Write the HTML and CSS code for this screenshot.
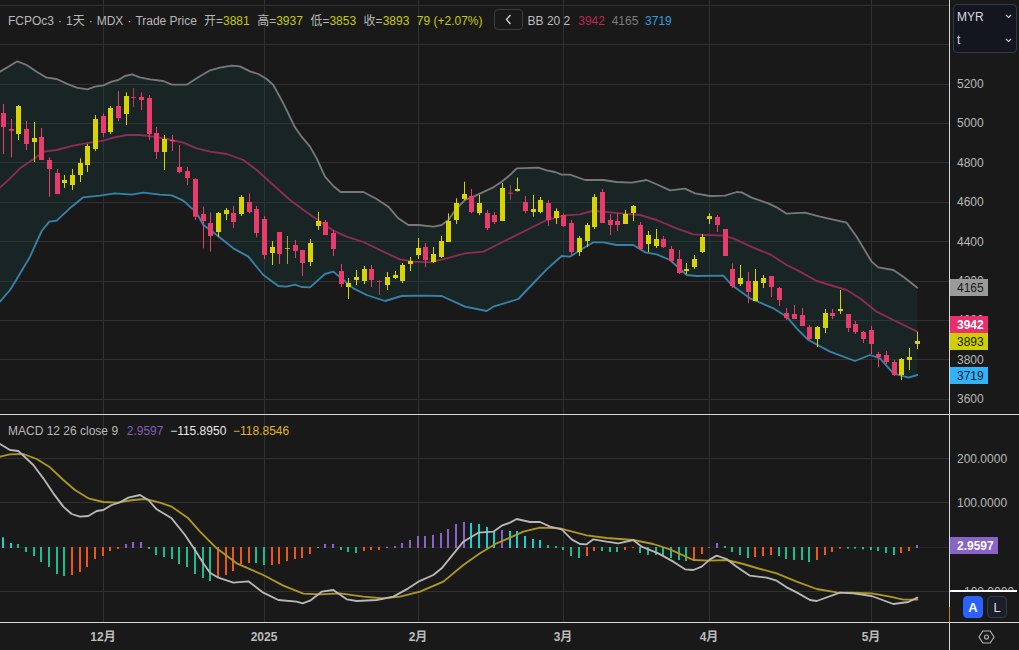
FILE: index.html
```html
<!DOCTYPE html>
<html lang="zh">
<head>
<meta charset="utf-8">
<title>FCPOc3 chart</title>
<link rel="stylesheet" href="styles.css">
</head>
<body>
<main class="chart">
  <section class="pane price-pane">
    <svg id="price-svg" class="plot" viewBox="0 0 2847 1242" preserveAspectRatio="none"></svg>
    <div class="legend legend-price">
      <span>FCPOc3</span><span>·</span><span>1天</span><span>·</span><span>MDX</span><span>·</span><span>Trade Price</span>
      <span class="ohlc first">开=<b>3881</b></span>
      <span class="ohlc">高=<b>3937</b></span>
      <span class="ohlc">低=<b>3853</b></span>
      <span class="ohlc">收=<b>3893</b></span>
      <span class="ohlc"><b>79 (+2.07%)</b></span>
      <button class="back" type="button" aria-label="collapse">
        <svg width="7" height="11" viewBox="0 0 7 11"><path d="M5.5 1 1.5 5.5 5.5 10"/></svg>
      </button>
      <span class="bb-name">BB 20 2</span>
      <span class="bb-value bb-mid">3942</span>
      <span class="bb-value bb-up">4165</span>
      <span class="bb-value bb-low">3719</span>
    </div>
  </section>

  <aside class="axis price-axis">
    <div class="tick">5200</div>
    <div class="tick">5000</div>
    <div class="tick">4800</div>
    <div class="tick">4600</div>
    <div class="tick">4400</div>
    <div class="tick">4200</div>
    <div class="tick">4000</div>
    <div class="tick">3800</div>
    <div class="tick">3600</div>
    <div class="tag tag-upper">4165</div>
    <div class="tag tag-mid">3942</div>
    <div class="tag tag-last">3893</div>
    <div class="tag tag-lower">3719</div>
    <div class="selects">
      <div class="select-row"><span>MYR</span><svg width="7" height="5" viewBox="0 0 7 5"><path d="M1 1 3.5 3.5 6 1"/></svg></div>
      <div class="select-row"><span>t</span><svg width="7" height="5" viewBox="0 0 7 5"><path d="M1 1 3.5 3.5 6 1"/></svg></div>
    </div>
  </aside>

  <section class="pane macd-pane">
    <svg id="macd-svg" class="plot" viewBox="0 15 2847 621" preserveAspectRatio="none"></svg>
    <div class="legend legend-macd">
      <span>MACD 12 26 close 9</span>
      <span class="macd-hist">2.9597</span>
      <span class="macd-line">−115.8950</span>
      <span class="macd-signal">−118.8546</span>
    </div>
  </section>

  <aside class="axis macd-axis">
    <div class="tick">200.0000</div>
    <div class="tick">100.0000</div>
    <div class="tick"></div>
    <div class="tick">−100.0000</div>
    <div class="tag tag-hist">2.9597</div>
    <div class="scale-buttons">
      <span class="scale-btn scale-on">A</span>
      <span class="scale-btn">L</span>
    </div>
    <div class="marker"></div>
  </aside>

  <div class="time-axis">
    <span></span>
    <span class="month">12月</span>
    <span class="month">2025</span>
    <span class="month">2月</span>
    <span class="month">3月</span>
    <span class="month">4月</span>
    <span class="month">5月</span>
  </div>
  <div class="corner">
    <svg width="17" height="14" viewBox="0 0 17 14"><path class="hex" d="M1 7 4.8 1H12.2L16 7 12.2 13H4.8Z"/><circle class="hex" cx="8.5" cy="7" r="2"/></svg>
  </div>
</main>
<script src="chart.js"></script>
</body>
</html>
```

FILE: styles.css
```css
* { box-sizing: border-box; }
html, body { margin: 0; padding: 0; height: 100%; background: #191919; overflow: hidden; }
body { font: 12px/1 "Liberation Sans", "Noto Sans CJK SC", sans-serif; color: #b8b8b8; }

.chart {
  display: grid;
  grid-template-columns: 949px 70px;
  grid-template-rows: 415px 208px 27px;
  width: 1019px;
  height: 650px;
  background: #191919;
}

.pane { position: relative; overflow: hidden; border-bottom: 1px solid #d8d8d8; }
.plot { display: block; width: 949px; height: 100%; }
.price-pane .plot { height: 414px; }
.macd-pane .plot { height: 207px; }

.legend { position: absolute; left: 8px; display: flex; align-items: center; white-space: nowrap; }
.legend-price { top: 9px; height: 23px; gap: 4px; }
.legend-macd { top: 7px; height: 18px; gap: 6.7px; }

.ohlc { margin-left: 3.5px; }
.ohlc.first { margin-left: 3px; }
.ohlc b { font-weight: 400; color: #c9c900; }

.back {
  display: flex; align-items: center; justify-content: center;
  width: 29px; height: 21px; margin: 0 0 2px 7px; padding: 0;
  background: #191919; border: 1px solid #3c3c3c; border-radius: 4px;
}
.back path { fill: none; stroke: #d8d8d8; stroke-width: 1.3; }

.bb-name { margin-left: 1px; color: #bdbdbd; }
.bb-value { margin-left: 2.7px; }
.bb-mid { margin-left: 4px; color: #b82a58; }
.bb-up { color: #7c7c7c; }
.bb-low { color: #2f9fd8; }

.macd-hist { margin-left: 2px; color: #7e5fb8; }
.macd-line { color: #e8e8e8; }
.macd-signal { color: #e0b41c; }

.axis { position: relative; border-left: 1px solid #d8d8d8; display: flex; flex-direction: column; }
.price-axis { padding-top: 64.3px; border-bottom: 1px solid #d8d8d8; }
.macd-axis { padding-top: 22px; border-bottom: 1px solid #d8d8d8; }
.tick { display: flex; align-items: center; flex: none; padding-left: 7px; color: #b8b8b8; }
.price-axis .tick { height: 39.4px; }
.macd-axis .tick { height: 44.3px; }

.tag { position: absolute; left: 0; height: 17px; padding-left: 7px; display: flex; align-items: center; color: #1a1a1a; }
.tag-upper { top: 279px; width: 38px; background: #9a9a9a; }
.tag-mid { top: 316px; width: 38px; background: #ea2d6d; color: #fff; font-weight: 700; }
.tag-last { top: 333px; width: 38px; background: #cfcf00; }
.tag-lower { top: 367px; width: 38px; background: #2fb4fb; }
.tag-hist { top: 122px; width: 48px; background: #8a63c9; color: #fff; font-weight: 700; }

.selects {
  position: absolute; left: 3px; top: 4px; width: 64px; height: 49px;
  background: #14161f; border: 1px solid #343848; border-radius: 4px;
  display: flex; flex-direction: column; padding: 0 4px 0 3px;
}
.select-row { display: flex; flex: 1; align-items: center; justify-content: space-between; color: #d8dae0; }
.select-row path { fill: none; stroke: #c8c8c8; stroke-width: 1.1; }

.scale-buttons {
  position: absolute; left: 0; top: 175px; width: 67px; height: 32px;
  background: #191919; border-top: 2px solid #fff;
  display: flex; gap: 4px; padding: 4px 0 0 13px;
}
.scale-btn {
  width: 20px; height: 22px; display: flex; align-items: center; justify-content: center;
  background: #1a1f2b; border: 1px solid #363b4a; border-radius: 4px;
  color: #d8dae0; font-size: 13px;
}
.scale-on { background: #2962ff; border-color: #2962ff; color: #fff; font-weight: 700; }
.marker { position: absolute; left: -1px; top: 192px; width: 1px; height: 15px; background: #b8860b; }

.time-axis {
  display: grid;
  grid-template-columns: 103px 161px 154px 145px 146px 162px 78px;
  align-items: center;
  overflow: hidden;
}
.month { justify-self: start; transform: translateX(-50%); color: #bcbcbc; font-weight: 700; font-size: 12px; white-space: nowrap; }
.corner { display: flex; align-items: center; justify-content: center; border-left: 1px solid #d8d8d8; padding-left: 3px; }
.hex { fill: none; stroke: #b5b5b5; stroke-width: 1.1; }
```

FILE: chart.js
```js
var NS = 'http://www.w3.org/2000/svg';
var GRID = '#303030';
var VGRID = [309, 792, 1254, 1689, 2127, 2613];

function el(parent, tag, attrs) {
  var n = document.createElementNS(NS, tag);
  for (var k in attrs) n.setAttribute(k, attrs[k]);
  parent.appendChild(n);
  return n;
}
function slotX(i) { return Math.floor((10 + 23.04 * i) / 3); }
function pts(a, dx, dy) {
  var s = [];
  for (var i = 0; i < a.length; i += 2) s.push((a[i] + (dx || 0)) + ',' + (a[i + 1] + (dy || 0)));
  return s;
}
function line(svg, a, color, w) {
  el(svg, 'polyline', { points: a.join(' '), fill: 'none', stroke: color, 'stroke-width': w, 'stroke-linejoin': 'round', 'stroke-linecap': 'round' });
}
function grid(svg, ys, x2, color) {
  ys.forEach(function (y) { el(svg, 'rect', { x: 0, y: y, width: x2, height: 3, fill: color || GRID }); });
  VGRID.forEach(function (x) { el(svg, 'rect', { x: x, y: 0, width: 3, height: 1300, fill: GRID }); });
}

/* ---- price pane ---- */
var upper = pts([0,215,25,200,52,184,80,195,110,215,140,233,170,237,200,251,230,263,262,268,285,260,310,256,335,245,355,240,375,228,396,223,420,232,450,238,490,243,515,254,560,254,590,235,630,211,660,203,695,197,720,199,750,214,775,222,800,237,820,255,850,310,885,382,905,410,930,440,950,475,975,530,1000,558,1022,576,1090,576,1130,597,1165,620,1195,655,1225,675,1255,675,1300,680,1325,675,1345,660,1370,625,1395,600,1420,590,1480,562,1505,545])
  .concat(pts([0,525,20,505,85,503,110,511,135,516,155,524,180,524,225,540,280,540,320,546,365,548,410,540,445,555,480,571,525,566,555,580,600,588,645,587,680,576,695,577,725,593,775,610,800,622,830,641,885,638,930,650,1010,668,1040,710,1085,785,1105,802,1150,810,1180,830,1222,863], 1530));

var middle = pts([0,563,30,535,60,505,100,478,130,455,170,450,220,437,270,428,310,422,340,413,380,405,420,405,460,410,500,417,550,428,590,445,630,455,680,462,730,480,770,510,820,555,870,600,920,637,1000,692,1040,710,1090,726,1150,755,1200,778,1240,785,1290,787,1340,775,1395,760,1450,755,1490,735])
  .concat(pts([0,715,50,690,110,660,160,647,210,643,245,633,280,635,330,640,390,645,440,660,500,685,550,703,640,707,670,715,730,743,780,763,830,795,870,815,920,843,1010,870,1050,895,1100,935,1150,960,1222,995], 1530));

var lower = pts([0,905,30,870,50,838,90,770,125,693,148,665,170,662,215,620,250,592,300,587,345,580,395,584,430,578,480,584,515,586,550,602,575,625,585,630,610,675,650,705,700,745,745,770,790,825,835,858,860,860,885,854,905,861,930,862,975,822,1000,815,1030,840,1060,865,1100,885,1155,903,1205,888,1260,887,1325,888,1395,920,1460,933,1480,920])
  .concat(pts([0,905,25,897,65,855,110,808,155,768,180,770,215,748,250,727,280,727,320,735,370,735,405,757,440,763,480,780,530,825,560,828,640,827,665,855,720,895,790,925,830,950,860,985,895,1020,960,1055,1035,1083,1080,1065,1110,1075,1150,1120,1195,1133,1222,1125], 1530));

var P = 1, Y = 0;
var candles = [
[312,339,381,462,P],[357,387,392,472,P],[315,318,402,420,Y],[363,387,432,450,P],[366,414,426,486,Y],[384,411,480,480,P],
[472,480,507,590,P],[507,519,582,582,P],[525,540,549,564,Y],[507,525,555,570,Y],[475,489,525,546,Y],[432,438,495,516,Y],
[345,357,447,453,Y],[340,348,399,411,P],[318,324,396,402,Y],[273,318,354,363,P],[277,288,342,375,Y],[264,291,294,321,P],
[277,291,300,330,P],[285,294,402,420,P],[381,399,456,477,P],[405,417,456,510,Y],[405,420,424,453,P],[435,501,516,520,P],
[501,513,534,555,P],[535,537,650,660,P],[620,642,663,745,P],[637,669,708,755,P],[636,639,696,711,Y],[624,630,642,660,Y],
[618,639,666,684,P],[585,591,642,648,Y],[580,606,636,640,P],[618,627,699,712,P],[648,657,765,777,P],[723,741,759,795,Y],
[696,696,762,792,P],[708,744,747,792,Y],[720,735,753,774,P],[750,750,789,828,P],[717,729,786,798,Y],[636,663,678,690,Y],
[660,666,705,705,P],[690,699,747,768,P],[792,813,852,861,P],[834,849,861,897,Y],[810,831,840,855,Y],[798,807,843,852,Y],
[795,807,840,861,P],[840,843,846,885,P],[816,831,855,870,Y],[813,825,834,837,Y],[789,795,843,849,Y],[771,783,792,813,Y],
[714,744,765,777,Y],[729,741,780,801,P],[741,762,786,789,Y],[708,723,771,774,Y],[640,663,726,726,Y],[595,609,660,672,Y],
[545,582,597,600,Y],[567,588,636,640,P],[585,609,639,645,Y],[630,639,684,690,P],[636,645,666,672,P],[549,564,663,663,Y],
[555,578,581,600,P],[533,567,573,575,Y],[588,606,633,640,P],[585,627,636,650,Y],[591,600,636,640,Y],[600,609,660,678,P],
[625,633,654,672,Y],[640,645,678,680,P],[660,669,756,765,P],[708,714,756,768,Y],[669,675,723,741,Y],[582,591,681,687,Y],
[567,576,669,669,P],[642,660,675,705,P],[640,663,675,693,P],[630,642,672,672,Y],[615,618,639,663,Y],[666,675,747,750,P],
[693,705,732,756,Y],[687,717,738,744,Y],[708,717,741,744,P],[738,747,783,786,P],[750,777,819,822,P],[789,807,813,822,Y],
[765,777,801,807,Y],[702,711,756,759,Y],[640,648,657,672,Y],[645,651,675,696,P],[687,687,768,768,P],[790,807,858,864,P],
[795,834,852,858,Y],[816,843,876,909,P],[807,843,903,903,Y],[825,834,849,864,Y],[828,828,861,891,P],[861,864,900,918,P],
[924,939,954,960,P],[915,942,957,957,P],[924,945,978,978,P],[975,981,1017,1020,P],[978,981,1017,1041,Y],[927,939,984,999,Y],
[927,939,948,957,P],[870,927,933,942,Y],[942,942,984,996,P],[963,972,996,1002,P],[993,996,1017,1029,P],[978,990,1032,1062,P],
[1056,1062,1071,1101,P],[1053,1065,1086,1092,P],[1080,1086,1125,1128,P],[1074,1077,1125,1140,Y],[1044,1071,1080,1110,Y],[996,1023,1032,1047,Y]
];

var price = document.getElementById('price-svg');
grid(price, [15, 132, 252, 369, 486, 606, 723, 843, 960, 1077, 1197], 2847);

el(price, 'polygon', { points: upper.concat(lower.slice().reverse()).join(' '), fill: 'rgba(25,80,85,0.2)' });
line(price, upper, '#787878', 5.5);
line(price, middle, '#8f2c54', 5.5);
line(price, lower, '#3683aa', 5.5);

candles.forEach(function (c, i) {
  var s = slotX(i) * 3;
  var color = c[4] ? '#e93c6c' : '#d8d400';
  var thin = (c[2] - c[1]) <= 3;
  el(price, 'rect', { x: s, y: c[0], width: 3, height: c[3] - c[0], fill: color, opacity: thin ? 0.75 : 1 });
  el(price, 'rect', { x: s - 6, y: c[1], width: 15, height: Math.max(3, c[2] - c[1]), fill: color, opacity: thin ? 0.75 : 1 });
});

/* ---- MACD pane ---- */
var G = '#14c08c', O = '#f2570f', V = '#8a63c9', C = '#10d2d0';
var hist = [
[382,C],[399,C],[402,G],[426,G],[438,G],[456,G],[471,G],[492,G],[498,G],[495,O],
[486,O],[471,O],[447,O],[438,O],[423,O],[417,O],[402,V],[396,V],[396,V],[417,G],
[435,G],[441,G],[447,G],[462,G],[471,G],[492,G],[504,G],[513,G],[501,O],[495,O],
[483,O],[462,O],[459,O],[459,G],[465,G],[465,O],[462,O],[453,O],[447,O],[444,O],
[432,O],[411,'#a8a040'],[402,V],[402,V],[420,G],[426,G],[429,G],[423,O],[420,O],[420,O],
[410,V],[408,V],[399,V],[390,V],[378,V],[378,V],[375,V],[369,V],[357,V],[342,V],
[336,V],[339,C],[342,C],[351,C],[363,C],[360,V],[363,C],
[363,C],[378,C],[387,C],[390,C],[405,G],[408,G],[420,G],[438,G],[444,G],[438,O],
[423,O],[423,G],[426,G],[426,G],[420,O],[414,O],[429,G],[435,G],[435,G],[438,G],
[444,G],[450,G],[453,G],[447,O],[432,O],[414,'#666'],[399,V],[408,G],[426,G],[435,G],
[444,G],[441,O],[438,O],[435,O],[438,G],[447,G],[450,G],[450,G],[456,G],[450,O],
[435,O],[426,O],[416,O],[416,G],[416,G],[418,G],[420,G],[423,G],[429,G],[435,G],
[429,O],[423,O],[405,V]
];

var macd = pts([0,102,30,120,55,123,100,165,130,205,160,250,190,290,215,312,240,320,265,318,290,303,310,300,335,285,360,277,385,263,420,255,445,270,470,298,515,325,555,375,585,420,610,460,630,488,655,503,700,518,745,514,790,548,835,570,890,575,908,580,930,572,965,545,1000,540,1040,568,1070,573,1130,570,1180,560,1225,535,1255,515,1300,495,1325,475,1390,395,1435,368,1480,365,1505,347])
  .concat(pts([0,338,20,327,60,336,90,336,120,350,155,358,185,388,210,402,230,403,250,388,290,395,325,400,370,390,395,410,445,430,490,455,525,478,550,480,575,470,600,448,620,437,650,447,680,470,720,497,770,503,800,512,830,532,860,547,900,570,920,573,990,548,1030,550,1085,558,1150,582,1195,576,1222,563], 1530));

var signal = pts([0,140,30,133,70,132,110,147,150,172,190,210,225,240,265,265,310,276,350,278,400,270,435,267,480,278,515,290,565,325,600,365,650,415,710,460,790,495,850,527,910,551,960,553,1020,550,1090,560,1150,565,1200,560,1260,545,1330,515,1390,465,1440,430,1490,400])
  .concat(pts([0,383,40,365,90,353,150,355,230,376,290,384,370,390,430,402,480,418,550,450,600,452,650,450,700,462,740,474,800,490,860,515,920,537,980,547,1030,548,1085,550,1140,560,1180,569,1222,569], 1530));

var ms = document.getElementById('macd-svg');
grid(ms, [144, 276, 543], 2847);
el(ms, 'rect', { x: 0, y: 411, width: 2847, height: 3, fill: '#262626' });

hist.forEach(function (h, i) {
  var s = (slotX(i) * 3);
  var top = Math.min(h[0], 411), bottom = Math.max(h[0], 414);
  el(ms, 'rect', { x: s - 3, y: top, width: 6, height: bottom - top, fill: h[1] });
});
line(ms, signal, '#ae981e', 5.5);
line(ms, macd, '#b8b8b8', 5.5);
```
